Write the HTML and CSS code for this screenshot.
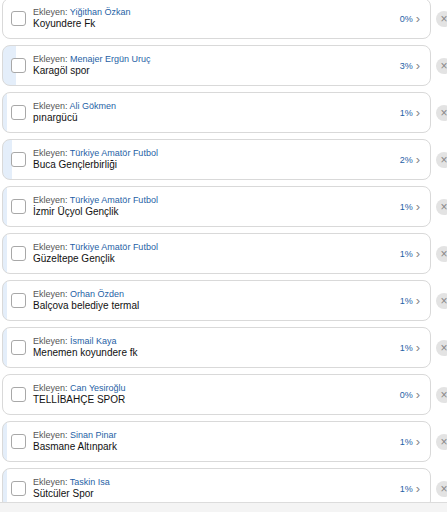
FILE: index.html
```html
<!DOCTYPE html>
<html lang="tr">
  <head>
    <meta charset="UTF-8" />
    <meta name="viewport" content="width=device-width, initial-scale=1.0" />
    <title>Takımlar</title>
    <link rel="stylesheet" href="styles.css">
  </head>
  <body>
    <div class="team-list">
      <div class="row">
        <div class="card" style="--p: 0%">
          <span class="check"></span>
          <div class="info">
            <div class="by">Ekleyen: <span class="author">Yiğithan Özkan</span></div>
            <div class="name">Koyundere Fk</div>
          </div>
          <span class="pct">0%</span><span class="chev">&#8250;</span>
        </div>
        <button class="remove">&times;</button>
      </div>
      <div class="row">
        <div class="card" style="--p: 3%">
          <span class="check"></span>
          <div class="info">
            <div class="by">Ekleyen: <span class="author">Menajer Ergün Uruç</span></div>
            <div class="name">Karagöl spor</div>
          </div>
          <span class="pct">3%</span><span class="chev">&#8250;</span>
        </div>
        <button class="remove">&times;</button>
      </div>
      <div class="row">
        <div class="card" style="--p: 1%">
          <span class="check"></span>
          <div class="info">
            <div class="by">Ekleyen: <span class="author">Ali Gökmen</span></div>
            <div class="name">pınargücü</div>
          </div>
          <span class="pct">1%</span><span class="chev">&#8250;</span>
        </div>
        <button class="remove">&times;</button>
      </div>
      <div class="row">
        <div class="card" style="--p: 2%">
          <span class="check"></span>
          <div class="info">
            <div class="by">Ekleyen: <span class="author">Türkiye Amatör Futbol</span></div>
            <div class="name">Buca Gençlerbirliği</div>
          </div>
          <span class="pct">2%</span><span class="chev">&#8250;</span>
        </div>
        <button class="remove">&times;</button>
      </div>
      <div class="row">
        <div class="card" style="--p: 1%">
          <span class="check"></span>
          <div class="info">
            <div class="by">Ekleyen: <span class="author">Türkiye Amatör Futbol</span></div>
            <div class="name">İzmir Üçyol Gençlik</div>
          </div>
          <span class="pct">1%</span><span class="chev">&#8250;</span>
        </div>
        <button class="remove">&times;</button>
      </div>
      <div class="row">
        <div class="card" style="--p: 1%">
          <span class="check"></span>
          <div class="info">
            <div class="by">Ekleyen: <span class="author">Türkiye Amatör Futbol</span></div>
            <div class="name">Güzeltepe Gençlik</div>
          </div>
          <span class="pct">1%</span><span class="chev">&#8250;</span>
        </div>
        <button class="remove">&times;</button>
      </div>
      <div class="row">
        <div class="card" style="--p: 1%">
          <span class="check"></span>
          <div class="info">
            <div class="by">Ekleyen: <span class="author">Orhan Özden</span></div>
            <div class="name">Balçova belediye termal</div>
          </div>
          <span class="pct">1%</span><span class="chev">&#8250;</span>
        </div>
        <button class="remove">&times;</button>
      </div>
      <div class="row">
        <div class="card" style="--p: 1%">
          <span class="check"></span>
          <div class="info">
            <div class="by">Ekleyen: <span class="author">İsmail Kaya</span></div>
            <div class="name">Menemen koyundere fk</div>
          </div>
          <span class="pct">1%</span><span class="chev">&#8250;</span>
        </div>
        <button class="remove">&times;</button>
      </div>
      <div class="row">
        <div class="card" style="--p: 0%">
          <span class="check"></span>
          <div class="info">
            <div class="by">Ekleyen: <span class="author">Can Yesiroğlu</span></div>
            <div class="name">TELLİBAHÇE SPOR</div>
          </div>
          <span class="pct">0%</span><span class="chev">&#8250;</span>
        </div>
        <button class="remove">&times;</button>
      </div>
      <div class="row">
        <div class="card" style="--p: 1%">
          <span class="check"></span>
          <div class="info">
            <div class="by">Ekleyen: <span class="author">Sinan Pinar</span></div>
            <div class="name">Basmane Altınpark</div>
          </div>
          <span class="pct">1%</span><span class="chev">&#8250;</span>
        </div>
        <button class="remove">&times;</button>
      </div>
      <div class="row">
        <div class="card" style="--p: 1%">
          <span class="check"></span>
          <div class="info">
            <div class="by">Ekleyen: <span class="author">Taskin Isa</span></div>
            <div class="name">Sütcüler Spor</div>
          </div>
          <span class="pct">1%</span><span class="chev">&#8250;</span>
        </div>
        <button class="remove">&times;</button>
      </div>
    </div>

    <div class="footer"></div>
  </body>
</html>
```

FILE: styles.css
```css
body {
  margin: 0;
  padding: 0;
  font-family: "Liberation Sans", Arial, sans-serif;
  background-color: #fff;
  overflow: hidden;
}

.team-list {
  display: flex;
  flex-direction: column;
  gap: 6px;
  margin-top: -2px;
  padding-left: 2px;
}

.row {
  display: flex;
  align-items: center;
  gap: 5px;
}

.card {
  width: 429px;
  height: 41px;
  box-sizing: border-box;
  flex-shrink: 0;
  display: flex;
  align-items: center;
  padding: 0 10px 0 8px;
  border: 1px solid #d9d9d9;
  border-radius: 8px;
  background: linear-gradient(to right, #e4eefa var(--p), #fff var(--p));
}

.check {
  width: 15px;
  height: 15px;
  box-sizing: border-box;
  border: 1px solid #a8a8a8;
  border-radius: 3px;
  background-color: #fff;
  flex-shrink: 0;
}

.info {
  flex: 1;
  margin-left: 7px;
  margin-top: -1px;
}

.by {
  font-size: 9px;
  line-height: 11px;
  color: #555;
}

.author {
  color: #1f5fa6;
}

.name {
  font-size: 10px;
  line-height: 12px;
  color: #111;
}

.pct {
  font-size: 9px;
  color: #1f5fa6;
}

.chev {
  font-size: 13px;
  line-height: 10px;
  color: #888;
  margin-left: 3px;
}

.remove {
  width: 16px;
  height: 16px;
  flex-shrink: 0;
  border: none;
  border-radius: 50%;
  background-color: #e3e3e3;
  color: #888;
  font-size: 12px;
  line-height: 16px;
  padding: 0;
  cursor: pointer;
}

.footer {
  position: fixed;
  left: 0;
  right: 0;
  bottom: 0;
  height: 9px;
  background-color: #f4f4f4;
  border-top: 1px solid #dcdcdc;
}
```
